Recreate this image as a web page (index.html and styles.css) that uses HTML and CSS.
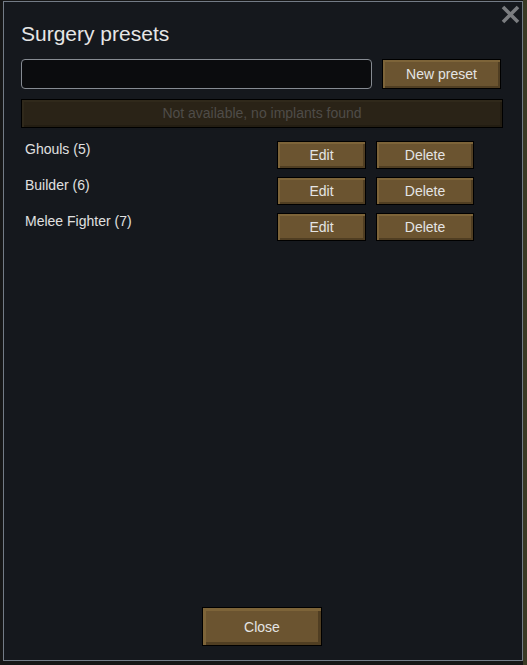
FILE: index.html
```html
<!DOCTYPE html>
<html>
<head>
  <title>Surgery presets</title>
  <link rel="stylesheet" href="styles.css">
</head>
<body>

  <div class="window">
    <button class="close-x" title="Close">
      <svg width="19" height="19" viewBox="0 0 19 19">
        <path d="M2 2 L17 17 M17 2 L2 17" stroke="#7b7d80" stroke-width="3.6" stroke-linecap="butt"/>
      </svg>
    </button>

    <h1>Surgery presets</h1>

    <div class="new-row">
      <input class="name-field" type="text">
      <button class="btn new-btn">New preset</button>
    </div>

    <div class="unavailable">Not available, no implants found</div>

    <div class="preset-list">
      <div class="preset">
        <span class="preset-name">Ghouls (5)</span>
        <button class="btn edit-btn">Edit</button>
        <button class="btn delete-btn">Delete</button>
      </div>
      <div class="preset">
        <span class="preset-name">Builder (6)</span>
        <button class="btn edit-btn">Edit</button>
        <button class="btn delete-btn">Delete</button>
      </div>
      <div class="preset">
        <span class="preset-name">Melee Fighter (7)</span>
        <button class="btn edit-btn">Edit</button>
        <button class="btn delete-btn">Delete</button>
      </div>
    </div>

    <div class="footer">
      <button class="btn close-btn">Close</button>
    </div>
  </div>

</body>
</html>
```

FILE: styles.css
```css
* {
  box-sizing: border-box;
}
body {
  margin: 0;
  height: 665px;
  overflow: hidden;
  font-family: "Liberation Sans", Arial, sans-serif;
  background: linear-gradient(to right, #161616 523px, #3a3a24 523px);
}
.window {
  position: relative;
  display: flex;
  flex-direction: column;
  width: 520px;
  height: 660px;
  margin: 1px 0 0 3px;
  padding: 20px 19px 14px 17px;
  background: #15181d;
  border: 1px solid #737b86;
}
.close-x {
  position: absolute;
  top: 3px;
  right: 2px;
  padding: 0;
  border: none;
  background: none;
  cursor: pointer;
}
.close-x svg {
  display: block;
}
h1 {
  margin: 0 0 13px 0;
  font-size: 21px;
  line-height: 24px;
  font-weight: normal;
  color: #e6e6e6;
}
.new-row {
  display: flex;
  gap: 10px;
}
.name-field {
  width: 351px;
  height: 30px;
  background: #0b0c0e;
  border: 1px solid #868b92;
  border-radius: 4px;
  color: #ddd;
}
.btn {
  font-family: "Liberation Sans", Arial, sans-serif;
  font-size: 14px;
  color: #e4e4e4;
  background: #6b5430;
  border: 1px solid #000;
  box-shadow: inset 2px 2px 0 #7d6439, inset -2px -2px 0 #503e22;
  cursor: pointer;
  padding: 0;
}
.new-btn {
  width: 119px;
  height: 30px;
}
.unavailable {
  margin-top: 10px;
  height: 29px;
  line-height: 27px;
  text-align: center;
  font-size: 14px;
  color: #4f4c48;
  background: #2a2317;
  border: 1px solid #000;
  box-shadow: inset 2px 2px 0 #30291b, inset -2px -2px 0 #231d12;
}
.preset-list {
  flex: 1;
  margin-top: 13px;
  display: flex;
  flex-direction: column;
  gap: 8px;
}
.preset {
  display: flex;
  align-items: flex-start;
  padding-left: 4px;
}
.preset-name {
  width: 252px;
  font-size: 14px;
  line-height: 17px;
  color: #e0e0e0;
}
.edit-btn {
  width: 89px;
  height: 28px;
}
.delete-btn {
  width: 98px;
  height: 28px;
  margin-left: 10px;
}
.footer {
  display: flex;
  justify-content: center;
}
.close-btn {
  width: 120px;
  height: 39px;
  box-shadow: inset 3px 3px 0 #7d6439, inset -3px -3px 0 #503e22;
}
```
